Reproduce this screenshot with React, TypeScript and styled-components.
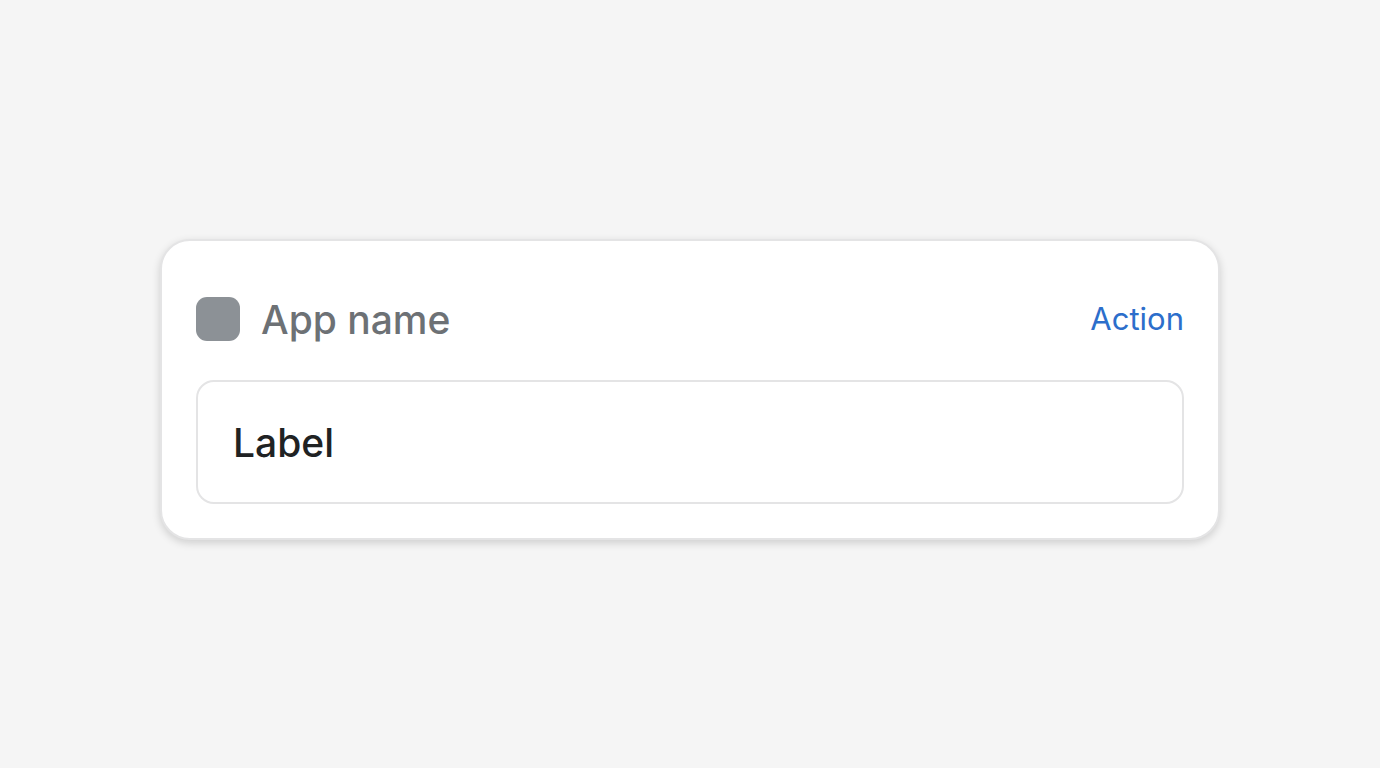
import React from "react";
import styled, { createGlobalStyle } from "styled-components";

const GlobalStyle = createGlobalStyle`
  *, *::before, *::after { box-sizing: border-box; }
  body {
    margin: 0;
    background: #f5f5f5;
    font-family: Inter, "Liberation Sans", sans-serif;
    -webkit-font-smoothing: antialiased;
  }
`;

const Page = styled.main`
  min-height: 100vh;
  display: flex;
  flex-direction: column;
  justify-content: center;
  padding: 24px 160px 13px;
`;

const Card = styled.section`
  display: flex;
  flex-direction: column;
  gap: 32px;
  padding: 49px 34px 34px;
  background: #ffffff;
  border: 2px solid #e4e4e5;
  border-radius: 30px;
  box-shadow: 0 3px 8px rgba(0, 0, 0, 0.16);
`;

const Header = styled.header`
  display: flex;
  align-items: center;
  justify-content: space-between;
  height: 58px;
`;

const AppTitle = styled.div`
  display: flex;
  align-items: center;
  gap: 21px;
`;

const AppIcon = styled.span`
  width: 44px;
  height: 44px;
  border-radius: 11px;
  background: #8c9196;
`;

const AppName = styled.h2`
  margin: 0;
  padding-top: 2px;
  font-size: 39px;
  line-height: 56px;
  font-weight: 500;
  color: #6d7175;
`;

const Action = styled.button`
  padding: 0;
  border: 0;
  background: none;
  font: inherit;
  font-size: 31px;
  line-height: 44px;
  color: #2c6ecb;
  cursor: pointer;
`;

const Panel = styled.div`
  padding: 33px 35px 31px;
  border: 2px solid #e4e4e5;
  border-radius: 18px;
`;

const PanelLabel = styled.p`
  margin: 0;
  font-size: 39px;
  line-height: 56px;
  font-weight: 500;
  color: #202223;
`;

export default function App() {
  return (
    <>
      <GlobalStyle />
      <Page>
        <Card>
          <Header>
            <AppTitle>
              <AppIcon aria-hidden="true" />
              <AppName>App name</AppName>
            </AppTitle>
            <Action type="button">Action</Action>
          </Header>
          <Panel>
            <PanelLabel>Label</PanelLabel>
          </Panel>
        </Card>
      </Page>
    </>
  );
}
